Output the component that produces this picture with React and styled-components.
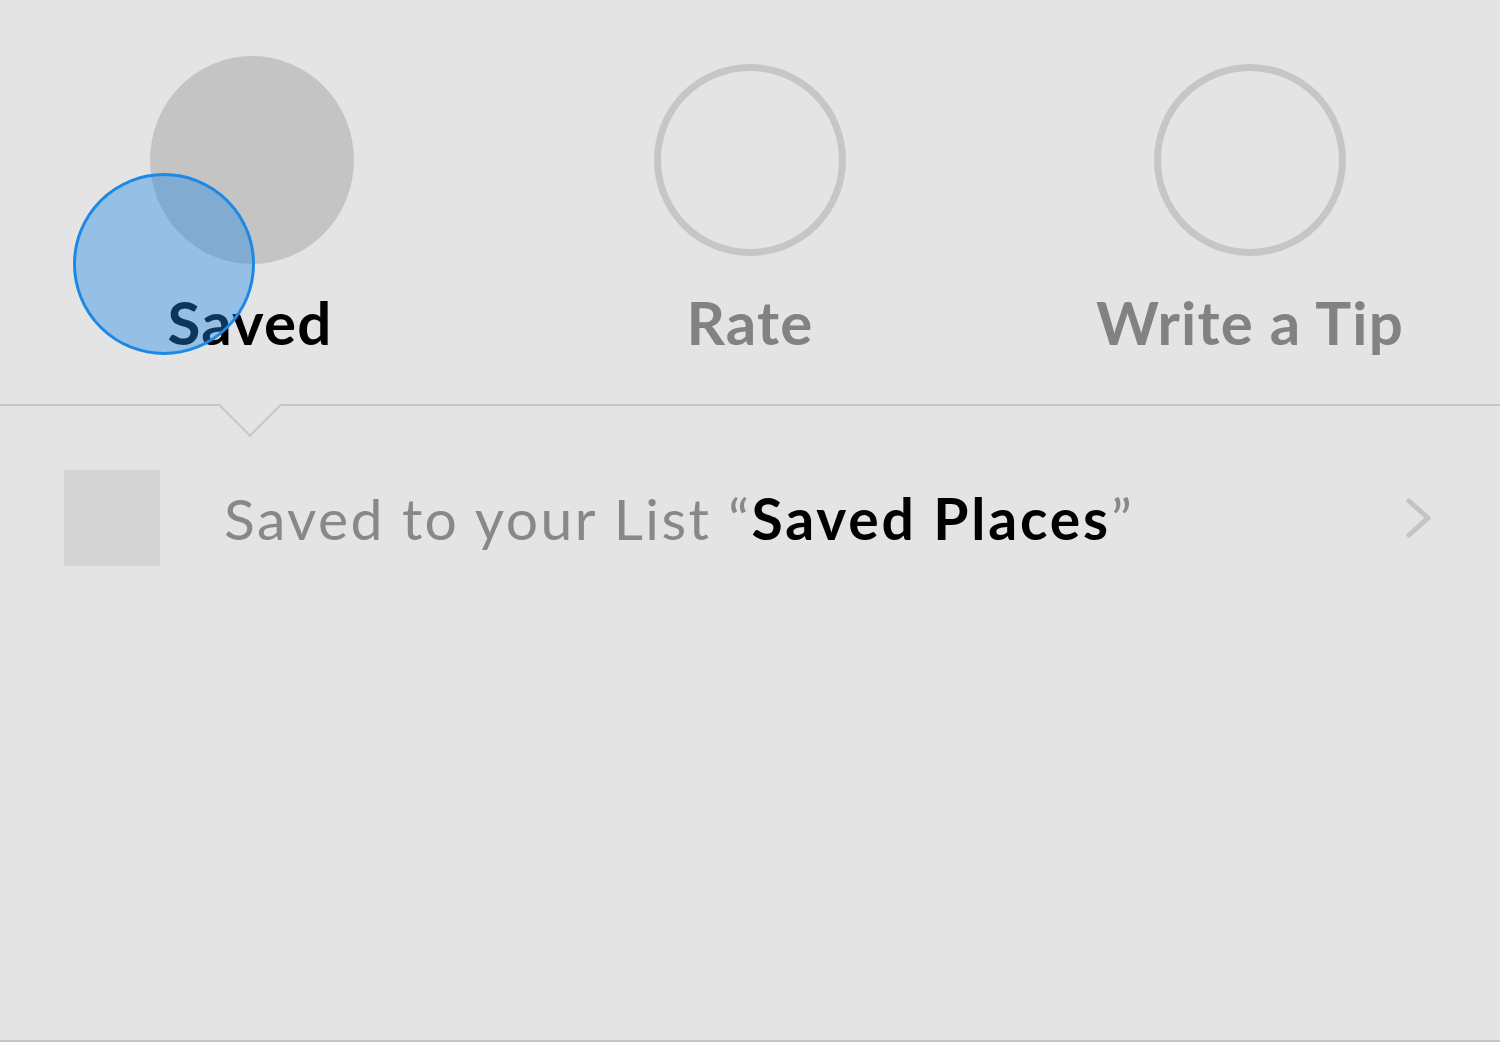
import React from "react";
import styled, { createGlobalStyle } from "styled-components";

const Global = createGlobalStyle`
  html, body { margin: 0; padding: 0; background: #e4e4e4; }
  body { font-family: Lato, "Open Sans", "Noto Sans", sans-serif; }
  * { box-sizing: border-box; }
`;

const Page = styled.div`
  position: relative;
  min-height: 100vh;
  display: flex;
  flex-direction: column;
  background: #e4e4e4;
  border-bottom: 2px solid #c4c4c4;
`;

const Tabs = styled.div`
  position: relative;
  display: grid;
  grid-template-columns: repeat(3, 1fr);
  height: 406px;
  border-bottom: 2px solid #c6c6c6;
`;

const Notch = styled.div`
  position: absolute;
  left: 228px;
  bottom: -24px;
  width: 44px;
  height: 44px;
  background: #e4e4e4;
  border-right: 2px solid #c6c6c6;
  border-bottom: 2px solid #c6c6c6;
  transform: rotate(45deg);
`;

const Tab = styled.div`
  display: flex;
  flex-direction: column;
  align-items: center;
  padding-top: 56px;
`;

const CircleSlot = styled.div`
  width: 208px;
  height: 208px;
  display: flex;
  align-items: center;
  justify-content: center;
`;

const Circle = styled.div`
  border-radius: 50%;
  width: ${(p) => (p.$filled ? "208px" : "192px")};
  height: ${(p) => (p.$filled ? "208px" : "192px")};
  margin-left: ${(p) => (p.$filled ? "4px" : "0")};
  background: ${(p) => (p.$filled ? "#c4c4c4" : "transparent")};
  border: ${(p) => (p.$filled ? "none" : "7px solid #c6c6c6")};
`;

const Label = styled.div`
  margin-top: 22px;
  font-size: 60px;
  line-height: 72px;
  font-weight: 700;
  letter-spacing: 1.2px;
  color: ${(p) => (p.$active ? "#000" : "#828282")};
`;

const Row = styled.div`
  display: flex;
  align-items: center;
  margin-top: 64px;
  padding: 0 66px 0 64px;
  height: 96px;
`;

const Thumb = styled.div`
  width: 96px;
  height: 96px;
  background: #d4d4d4;
  flex: none;
`;

const RowText = styled.div`
  flex: 1;
  margin-left: 64px;
  font-size: 57px;
  line-height: 64px;
  letter-spacing: 2.4px;
  color: #888;
  white-space: nowrap;
`;

const Strong = styled.span`
  color: #000;
  font-weight: 700;
  letter-spacing: 2.8px;
`;

const Chevron = styled.svg`
  width: 30px;
  height: 44px;
  flex: none;
`;

const Touch = styled.div`
  position: absolute;
  left: 73px;
  top: 173px;
  width: 182px;
  height: 182px;
  border-radius: 50%;
  background: rgba(30, 136, 229, 0.4);
  border: 3px solid #1e88e5;
  pointer-events: none;
`;

const tabs = [
  { label: "Saved", filled: true, active: true },
  { label: "Rate" },
  { label: "Write a Tip" },
];

export default function App() {
  return (
    <>
      <Global />
      <Page>
        <Tabs>
          {tabs.map((t) => (
            <Tab key={t.label}>
              <CircleSlot>
                <Circle $filled={t.filled} />
              </CircleSlot>
              <Label $active={t.active}>{t.label}</Label>
            </Tab>
          ))}
          <Notch />
        </Tabs>
        <Row>
          <Thumb />
          <RowText>
            Saved to your List “<Strong>Saved Places</Strong>”
          </RowText>
          <Chevron viewBox="0 0 30 44">
            <polyline
              points="5,5 24,22 5,39"
              fill="none"
              stroke="#c4c4c4"
              strokeWidth="5"
              strokeLinecap="round"
              strokeLinejoin="round"
            />
          </Chevron>
        </Row>
        <Touch />
      </Page>
    </>
  );
}
